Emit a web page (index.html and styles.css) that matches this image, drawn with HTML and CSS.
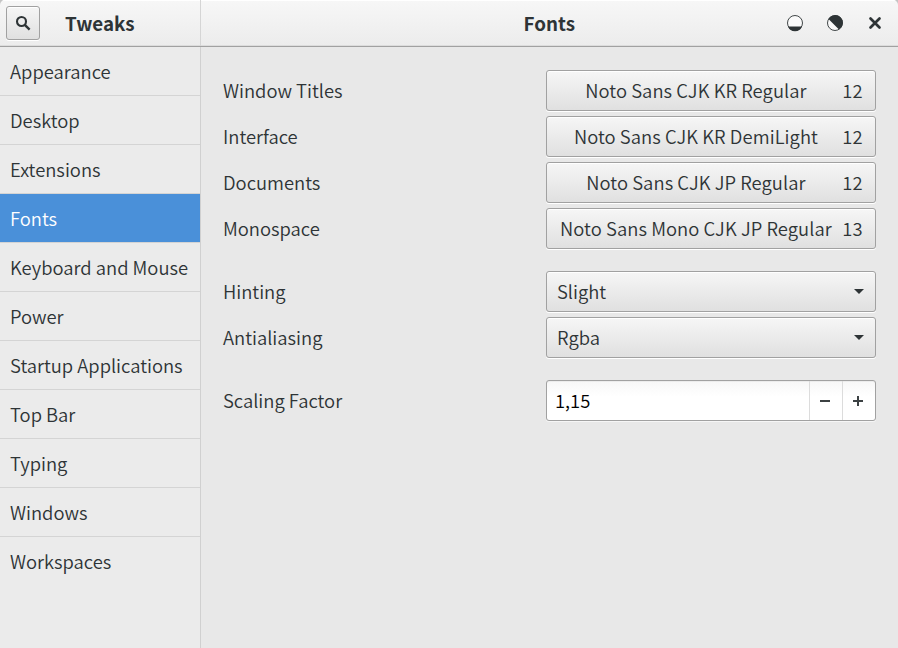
FILE: index.html
```html
<!DOCTYPE html>
<html lang="en">
<head>
<meta charset="utf-8">
<title>Tweaks</title>
<link rel="stylesheet" href="styles.css">
</head>
<body>
<div class="window">
  <header class="titlebar">
    <div class="side-head">
      <button class="search" aria-label="Search"><svg width="16" height="16" viewBox="0 0 16 16"><circle cx="6.5" cy="6.5" r="4.5" fill="none" stroke="#2e3436" stroke-width="2.1"/><path d="M9.8 9.8 14.6 14.6" stroke="#2e3436" stroke-width="2.4"/></svg></button>
      <h1 class="app-title">Tweaks</h1>
    </div>
    <div class="main-head">
      <h2 class="page-title">Fonts</h2>
      <div class="controls">
        <svg width="18" height="18" viewBox="0 0 18 18"><circle cx="9" cy="9" r="7.5" fill="#fafafa" stroke="#2e3436" stroke-width=".9"/><path d="M2 12.5H16A7.5 7.5 0 0 1 2 12.5Z" fill="#2e3436"/></svg>
        <svg width="18" height="18" viewBox="0 0 18 18"><circle cx="9" cy="9" r="7.5" fill="#fafafa" stroke="#2e3436" stroke-width=".9"/><path d="M2.5 5A7.7 7.7 0 1 1 13 15.5Z" fill="#2e3436"/></svg>
        <svg width="18" height="18" viewBox="0 0 18 18"><path d="M4.5 4.5 13.5 13.5M13.5 4.5 4.5 13.5" stroke="#2e3436" stroke-width="2.7" stroke-linecap="round"/></svg>
      </div>
    </div>
  </header>
  <div class="body">
    <nav class="sidebar">
      <a class="item">Appearance</a>
      <a class="item">Desktop</a>
      <a class="item">Extensions</a>
      <a class="item selected">Fonts</a>
      <a class="item">Keyboard and Mouse</a>
      <a class="item">Power</a>
      <a class="item">Startup Applications</a>
      <a class="item">Top Bar</a>
      <a class="item">Typing</a>
      <a class="item">Windows</a>
      <a class="item last">Workspaces</a>
    </nav>
    <main class="content">
      <div class="row"><span class="label">Window Titles</span><button class="control font"><span class="name">Noto Sans CJK KR Regular</span><span class="size">12</span></button></div>
      <div class="row"><span class="label">Interface</span><button class="control font"><span class="name">Noto Sans CJK KR DemiLight</span><span class="size">12</span></button></div>
      <div class="row"><span class="label">Documents</span><button class="control font"><span class="name">Noto Sans CJK JP Regular</span><span class="size">12</span></button></div>
      <div class="row"><span class="label">Monospace</span><button class="control font"><span class="name">Noto Sans Mono CJK JP Regular</span><span class="size">13</span></button></div>
      <div class="row group"><span class="label">Hinting</span><button class="control combo"><span class="choice">Slight</span><svg width="10" height="5" viewBox="0 0 10 5"><path d="M0 0H10L5 5Z" fill="#2e3436"/></svg></button></div>
      <div class="row"><span class="label">Antialiasing</span><button class="control combo"><span class="choice">Rgba</span><svg width="10" height="5" viewBox="0 0 10 5"><path d="M0 0H10L5 5Z" fill="#2e3436"/></svg></button></div>
      <div class="row group"><span class="label">Scaling Factor</span><div class="control spin"><span class="value">1,15</span><span class="step"><svg width="10" height="10" viewBox="0 0 10 10"><path d="M0 4H10V6H0Z" fill="#3c4143"/></svg></span><span class="step"><svg width="10" height="10" viewBox="0 0 10 10"><path d="M0 4H4V0H6V4H10V6H6V10H4V6H0Z" fill="#3c4143"/></svg></span></div></div>
    </main>
  </div>
</div>
</body>
</html>
```
FILE: styles.css
```css
* { box-sizing: border-box; }
html { background: #c4c4c4; }
body { margin: 0; font-family: "Noto Sans CJK KR", "Noto Sans", sans-serif; font-size: 18.4px; font-weight: 350; color: #2e3436; overflow: hidden; }
button { font: inherit; color: inherit; padding: 0; margin: 0; }
svg { display: block; }
.window { width: 898px; height: 648px; display: flex; flex-direction: column; border-radius: 5px 5px 0 0; overflow: hidden; }
.titlebar { height: 47px; flex: none; display: flex; border-bottom: 1px solid #a1a1a1; background: linear-gradient(#f7f7f7, #ececec); box-shadow: inset 0 1px #fff, inset 0 -1px #dcdcdc; }
.side-head { width: 201px; border-right: 1px solid #d5d5d5; display: flex; align-items: center; padding-left: 6px; }
.search { width: 34px; height: 34px; border: 1px solid #a1a1a1; border-radius: 3px; background: linear-gradient(#f6f6f6, #e0e0e0); box-shadow: inset 0 1px #fff, 0 1px #fff; display: grid; place-items: center; }
.app-title, .page-title { font-size: 18.8px; font-weight: 700; line-height: 28px; margin: 0; }
.app-title { margin-left: 25px; }
.main-head { flex: 1; display: flex; align-items: center; }
.page-title { flex: 1; text-align: right; }
.controls { width: 323px; display: flex; justify-content: flex-end; gap: 22px; padding-right: 14px; }
.body { flex: 1; display: flex; background: #e8e8e8; }
.sidebar { width: 201px; border-right: 1px solid #d0d0d0; background: #ebebeb; }
.item { display: block; height: 49px; line-height: 49px; padding-left: 10px; border-bottom: 1px solid #d4d4d4; white-space: nowrap; }
.item.last { border: 0; }
.selected { color: #fff; background: #4a90d9 padding-box; }
.content { flex: 1; padding: 23px 22px; display: flex; flex-direction: column; gap: 5px; }
.row { display: flex; align-items: center; justify-content: space-between; height: 41px; }
.row.group { margin-top: 17px; }
.label, .name, .size, .choice, .value { padding-bottom: 2px; }
.control { width: 330px; height: 41px; border: 1px solid #a1a1a1; border-radius: 3px; background: linear-gradient(#f6f6f6, #e0e0e0); box-shadow: inset 0 1px #fff, 0 1px #fff; display: flex; align-items: center; }
.font { padding: 0 12.5px; gap: 10px; }
.name { flex: 1; text-align: center; white-space: nowrap; letter-spacing: .06px; }
.combo { justify-content: space-between; padding: 0 11px 0 10px; }
.spin { background: linear-gradient(#f7f7f7, #fff 40%); color: #000; box-shadow: inset 0 1px #ececec, 0 1px #f6f6f6; }
.value { flex: 1; padding-left: 8px; }
.step { width: 33px; height: 39px; border-left: 1px solid #dcdcdc; padding-right: 2px; display: grid; place-items: center; }
```
